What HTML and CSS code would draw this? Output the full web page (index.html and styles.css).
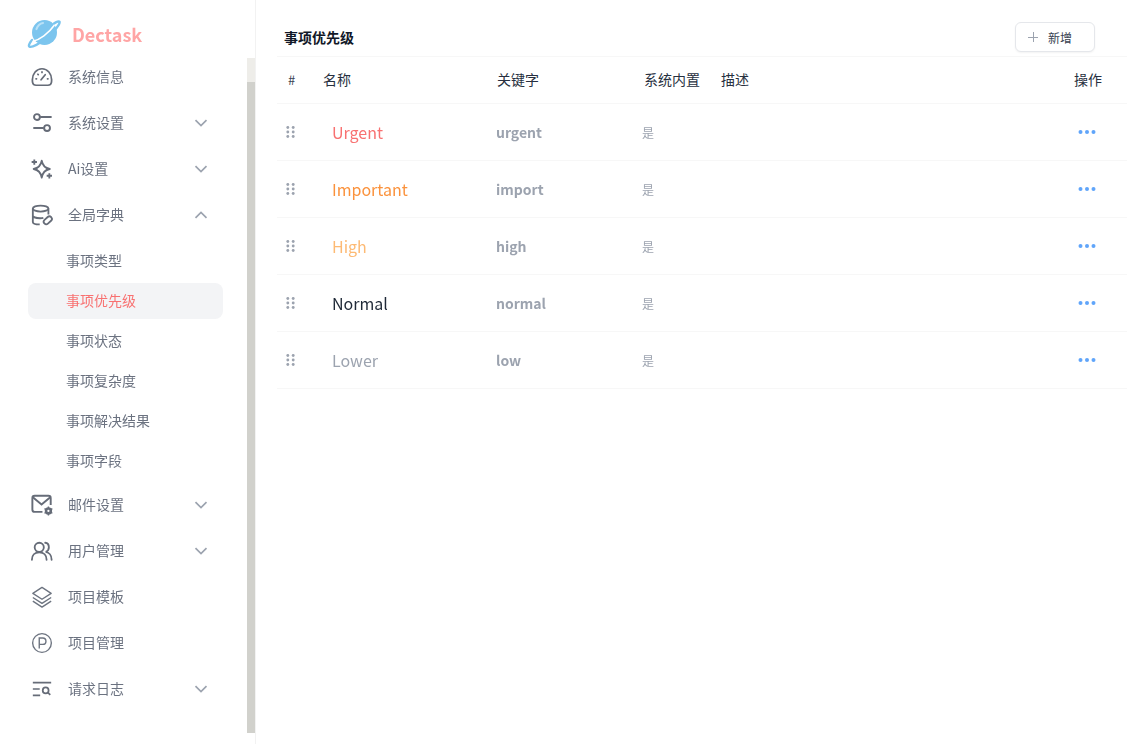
FILE: index.html
```html
<!DOCTYPE html>
<html lang="zh-CN">
<head>
    <meta charset="UTF-8">
    <title>Dectask</title>
    <link rel="stylesheet" href="styles.css">
</head>
<body>
    <svg width="0" height="0" class="sprite">
        <symbol id="chev-down" viewBox="0 0 14 8"><path d="M1.5 1.2 7 6.6l5.5-5.4" fill="none" stroke="currentColor" stroke-width="1.7"/></symbol>
        <symbol id="chev-up" viewBox="0 0 14 8"><path d="M1.5 6.8 7 1.4l5.500 5.400" fill="none" stroke="currentColor" stroke-width="1.7"/></symbol>
        <symbol id="grip" viewBox="0 0 10 14"><g fill="currentColor"><circle cx="2" cy="2" r="1.6"/><circle cx="8" cy="2" r="1.6"/><circle cx="2" cy="7" r="1.6"/><circle cx="8" cy="7" r="1.6"/><circle cx="2" cy="12" r="1.6"/><circle cx="8" cy="12" r="1.6"/></g></symbol>
        <symbol id="dots" viewBox="0 0 18 4"><g fill="currentColor"><circle cx="2.5" cy="2" r="2"/><circle cx="9" cy="2" r="2"/><circle cx="15.5" cy="2" r="2"/></g></symbol>
    </svg>

    <div class="app">
        <aside class="sidebar">
            <div class="sidebar-body">
                <div class="logo">
                    <svg class="logo-icon" viewBox="0 0 34 34" width="34" height="34">
                        <circle cx="17.5" cy="16.5" r="12.5" fill="#7cc5ee"/>
                        <path d="M9.5 13c1-3 3.500-5.500 6.500-6" fill="none" stroke="#b9e1f7" stroke-width="2.200" stroke-linecap="round"/>
                        <path d="M27 7.500c2.500-1.800 5-2.600 5.500-1.800 1 1.800-4.500 9-12 15.500S4.500 32 2.300 30.500C1.300 29.800 2.500 27 5 24" fill="none" stroke="#7cc5ee" stroke-width="2.400" stroke-linecap="round"/>
                        <path d="M5.500 25.500c7-1.500 16-8 22-16.500" fill="none" stroke="#fff" stroke-width="1.500"/>
                    </svg>
                    <span class="logo-text">Dectask</span>
                </div>
                <nav class="menu">
                    <div class="menu-item">
                        <svg class="menu-icon" viewBox="0 0 24 24"><g fill="none" stroke="#666c78" stroke-width="1.900" stroke-linecap="round"><path d="M5.500 21h13c2 0 3.300-1 3.700-2.800.3-1.200.3-2.200.3-3.200C22.500 8.600 18 3 12 3S1.500 8.600 1.500 15c0 1 0 2 .3 3.200.4 1.800 1.700 2.800 3.700 2.800Z"/><path d="m11 15 4.500-5.500M5.500 14h.5M18 14h.5M7.500 9l.4.400M12 6.500V7"/></g></svg>
                        <span class="menu-label">系统信息</span>
                    </div>
                    <div class="menu-item">
                        <svg class="menu-icon" viewBox="0 0 24 24"><g fill="none" stroke="#666c78" stroke-width="2.100"><circle cx="6.500" cy="5.500" r="3.200"/><path d="M10 5.500h12.500M2.500 17.500H14"/><circle cx="17.500" cy="17.500" r="3.200"/></g></svg>
                        <span class="menu-label">系统设置</span>
                        <svg class="chevron"><use href="#chev-down"/></svg>
                    </div>
                    <div class="menu-item">
                        <svg class="menu-icon" viewBox="0 0 24 24"><g fill="none" stroke="#666c78" stroke-width="2" stroke-linejoin="round"><path d="M11.700 3c.9 5 3.400 8 8.800 9-5.400 1-7.900 4-8.800 9.500-.9-5.500-3.400-8.500-8.800-9.500 5.400-1 7.900-4 8.800-9Z"/><path d="M3.600 1.500v5.800M.7 4.400h5.800M20 16.500v5.800M17.100 19.400h5.800"/></g></svg>
                        <span class="menu-label">Ai设置</span>
                        <svg class="chevron"><use href="#chev-down"/></svg>
                    </div>
                    <div class="menu-item">
                        <svg class="menu-icon" viewBox="0 0 24 24"><g fill="none" stroke="#666c78" stroke-width="2"><ellipse cx="10.500" cy="5" rx="8.500" ry="3.300"/><path d="M2 5v14.500c0 1.700 3 2.800 7.500 2.800M19 5v6.500M2 12.500c0 1.700 3.500 3 8 3 1.500 0 2.500-.1 3.500-.4"/><rect x="13.500" y="15" width="10" height="5.500" rx="2.700" transform="rotate(-42 18.500 18)"/></g></svg>
                        <span class="menu-label">全局字典</span>
                        <svg class="chevron"><use href="#chev-up"/></svg>
                    </div>
                    <div class="submenu">
                        <div class="submenu-item">事项类型</div>
                        <div class="submenu-item active">事项优先级</div>
                        <div class="submenu-item">事项状态</div>
                        <div class="submenu-item">事项复杂度</div>
                        <div class="submenu-item">事项解决结果</div>
                        <div class="submenu-item">事项字段</div>
                    </div>
                    <div class="menu-item">
                        <svg class="menu-icon" viewBox="0 0 24 24"><g fill="none" stroke="#666c78" stroke-width="2.100"><path d="M12.500 19.500H4c-1.500 0-2.500-1-2.500-2.500V4.500C1.500 3 2.500 2 4 2h15c1.500 0 2.500 1 2.500 2.500V12"/><path d="m2 3.500 9.500 8 9.500-8"/></g><circle cx="19" cy="18.500" r="2.700" fill="none" stroke="#666c78" stroke-width="2.600"/><path d="M19 13.500v10M14.700 16l8.600 5M14.700 21l8.600-5" stroke="#666c78" stroke-width="1.500"/><circle cx="19" cy="18.500" r="1.200" fill="#fff"/></svg>
                        <span class="menu-label">邮件设置</span>
                        <svg class="chevron"><use href="#chev-down"/></svg>
                    </div>
                    <div class="menu-item">
                        <svg class="menu-icon" viewBox="0 0 24 24"><g fill="none" stroke="#666c78" stroke-width="2" stroke-linecap="round"><circle cx="9" cy="8" r="5"/><path d="M1 21.500c0-4.500 3-8 8-8s8 3.500 8 8M15.500 3c2.500.2 4 2.200 4 5s-1.500 4.500-3.500 5c3.500.5 6.500 3.500 6.500 8.500"/></g></svg>
                        <span class="menu-label">用户管理</span>
                        <svg class="chevron"><use href="#chev-down"/></svg>
                    </div>
                    <div class="menu-item">
                        <svg class="menu-icon" viewBox="0 0 24 24"><g fill="none" stroke="#6d7480" stroke-width="1.500" stroke-linejoin="round"><path d="M12 1.500 22 8l-10 6.500L2 8Z"/><path d="m2 12.500 10 6.500 10-6.500M2 16.500 12 23l10-6.500"/></g></svg>
                        <span class="menu-label">项目模板</span>
                    </div>
                    <div class="menu-item">
                        <svg class="menu-icon" viewBox="0 0 24 24"><g fill="none" stroke="#6d7480" stroke-width="1.500"><circle cx="12" cy="12" r="10.200"/><path d="M9 18V6.500h3.800a3.500 3.500 0 0 1 0 7H9"/></g></svg>
                        <span class="menu-label">项目管理</span>
                    </div>
                    <div class="menu-item">
                        <svg class="menu-icon" viewBox="0 0 24 24"><g fill="none" stroke="#666c78" stroke-width="1.900"><path d="M2 5h20M2 12h7.500M2 19h8"/><circle cx="16" cy="13.500" r="3.200"/><path d="m18.500 16 2.500 2.500"/></g></svg>
                        <span class="menu-label">请求日志</span>
                        <svg class="chevron"><use href="#chev-down"/></svg>
                    </div>
                </nav>
            </div>
            <div class="scrollbar"><div class="scrollbar-thumb"></div></div>
        </aside>

        <main class="content">
            <header class="content-head">
                <h1 class="content-title">事项优先级</h1>
                <button class="add-button"><span class="add-plus"></span>新增</button>
            </header>
            <div class="table">
                <div class="row head-row">
                    <div class="cell-drag">#</div>
                    <div>名称</div>
                    <div class="head-key">关键字</div>
                    <div class="head-builtin">系统内置</div>
                    <div>描述</div>
                    <div class="cell-ops">操作</div>
                </div>
                <div class="row data-row">
                    <div class="cell-drag"><svg class="grip"><use href="#grip"/></svg></div>
                    <div class="cell-name urgent">Urgent</div>
                    <div class="cell-key">urgent</div>
                    <div class="cell-builtin">是</div>
                    <div></div>
                    <div class="cell-ops"><svg class="dots"><use href="#dots"/></svg></div>
                </div>
                <div class="row data-row">
                    <div class="cell-drag"><svg class="grip"><use href="#grip"/></svg></div>
                    <div class="cell-name important">Important</div>
                    <div class="cell-key">import</div>
                    <div class="cell-builtin">是</div>
                    <div></div>
                    <div class="cell-ops"><svg class="dots"><use href="#dots"/></svg></div>
                </div>
                <div class="row data-row">
                    <div class="cell-drag"><svg class="grip"><use href="#grip"/></svg></div>
                    <div class="cell-name high">High</div>
                    <div class="cell-key">high</div>
                    <div class="cell-builtin">是</div>
                    <div></div>
                    <div class="cell-ops"><svg class="dots"><use href="#dots"/></svg></div>
                </div>
                <div class="row data-row">
                    <div class="cell-drag"><svg class="grip"><use href="#grip"/></svg></div>
                    <div class="cell-name normal">Normal</div>
                    <div class="cell-key">normal</div>
                    <div class="cell-builtin">是</div>
                    <div></div>
                    <div class="cell-ops"><svg class="dots"><use href="#dots"/></svg></div>
                </div>
                <div class="row data-row">
                    <div class="cell-drag"><svg class="grip"><use href="#grip"/></svg></div>
                    <div class="cell-name lower">Lower</div>
                    <div class="cell-key">low</div>
                    <div class="cell-builtin">是</div>
                    <div></div>
                    <div class="cell-ops"><svg class="dots"><use href="#dots"/></svg></div>
                </div>
            </div>
        </main>
    </div>
</body>
</html>
```

FILE: styles.css
```css
html, body {
    margin: 0;
    height: 100%;
    overflow: hidden;
    background: #fff;
    font-family: "Noto Sans CJK SC", "Noto Sans", sans-serif;
}
.sprite {
    display: block;
    height: 0;
}
.app {
    display: flex;
    height: 744px;
}
.sidebar {
    display: flex;
    width: 255px;
    flex: none;
    border-right: 1px solid #f2f2f2;
}
.sidebar-body {
    flex: 1;
    min-width: 0;
    will-change: transform;
}
.logo {
    display: flex;
    align-items: center;
    height: 54px;
    padding: 14px 0 0 27px;
    box-sizing: border-box;
}
.logo-icon {
    flex: none;
    margin-top: -2px;
}
.logo-text {
    margin-left: 11px;
    font-size: 18px;
    font-weight: 700;
    color: #ffa5a5;
}
.menu-item {
    display: flex;
    align-items: center;
    height: 46px;
    padding-left: 31px;
    font-size: 14px;
    color: #6b7280;
}
.menu-icon {
    width: 22px;
    height: 22px;
    flex: none;
}
.menu-label {
    margin: 0 0 2px 15px;
    flex: 1;
}
.chevron {
    width: 14px;
    height: 8px;
    margin-right: 39px;
    color: #9ca3af;
}
.submenu {
    padding-top: 5px;
    margin-bottom: -1px;
}
.submenu-item {
    display: flex;
    align-items: center;
    height: 36px;
    box-sizing: border-box;
    margin: 0 24px 4px 28px;
    padding: 0 0 2px 38px;
    border-radius: 8px;
    font-size: 14px;
    color: #6b7280;
}
.submenu-item.active {
    background: #f3f4f6;
    color: #f87171;
}
.scrollbar {
    flex: none;
    width: 8px;
    margin: 58px 0 11px;
    background: #eeede9;
}
.scrollbar-thumb {
    height: 651px;
    margin-top: 24px;
    background: #d1d1cc;
}
.content {
    flex: 1;
    min-width: 0;
    padding: 0 17px 0 21px;
}
.content-head {
    display: flex;
    align-items: flex-start;
    justify-content: space-between;
    height: 57px;
    padding: 22px 32px 0 7px;
    box-sizing: border-box;
    border-bottom: 1px solid #f7f7f7;
}
.content-title {
    margin: 5px 0 0;
    font-size: 14px;
    line-height: 20px;
    font-weight: 700;
    color: #111827;
}
.add-button {
    display: flex;
    align-items: center;
    width: 80px;
    height: 30px;
    padding: 0 0 0 12px;
    border: 1px solid #e5e7eb;
    border-radius: 6px;
    background: #fff;
    box-shadow: 0 1px 2px rgba(0, 0, 0, 0.05);
    font-family: inherit;
    font-size: 12px;
    color: #374151;
}
.add-plus {
    width: 10px;
    height: 10px;
    margin-right: 10px;
    background: linear-gradient(#9ca3af, #9ca3af) center / 100% 1px no-repeat,
                linear-gradient(#9ca3af, #9ca3af) center / 1px 100% no-repeat;
}
.row {
    display: grid;
    grid-template-columns: 46px 173px 147px 78px 1fr 53px;
    align-items: center;
    height: 57px;
    box-sizing: border-box;
    border-bottom: 1px solid #f7f7f7;
}
.data-row {
    will-change: transform;
}
.head-row {
    height: 47px;
    padding-bottom: 2px;
    font-size: 14px;
    color: #273040;
}
.head-row .cell-drag {
    padding-left: 11px;
    font-size: 13px;
    color: #374151;
}
.head-key {
    padding-left: 1px;
}
.head-builtin {
    padding-left: 1px;
}
.cell-drag {
    padding-left: 9px;
}
.grip {
    display: block;
    width: 9px;
    height: 14px;
    margin-top: -1px;
    color: #9ca3af;
}
.cell-name {
    padding-left: 9px;
    font-size: 16px;
}
.urgent { color: #f87171; }
.important { color: #fb923c; }
.high { color: #fdba74; }
.normal { color: #1f2937; }
.lower { color: #9ca3af; }
.cell-key {
    font-size: 14px;
    font-weight: 700;
    color: #9ca3af;
}
.cell-builtin {
    margin-left: -1px;
    font-size: 12px;
    color: #9ca3af;
}
.dots {
    display: block;
    width: 18px;
    height: 4px;
    margin: 0 0 0 4px;
    color: #60a5fa;
}
```
